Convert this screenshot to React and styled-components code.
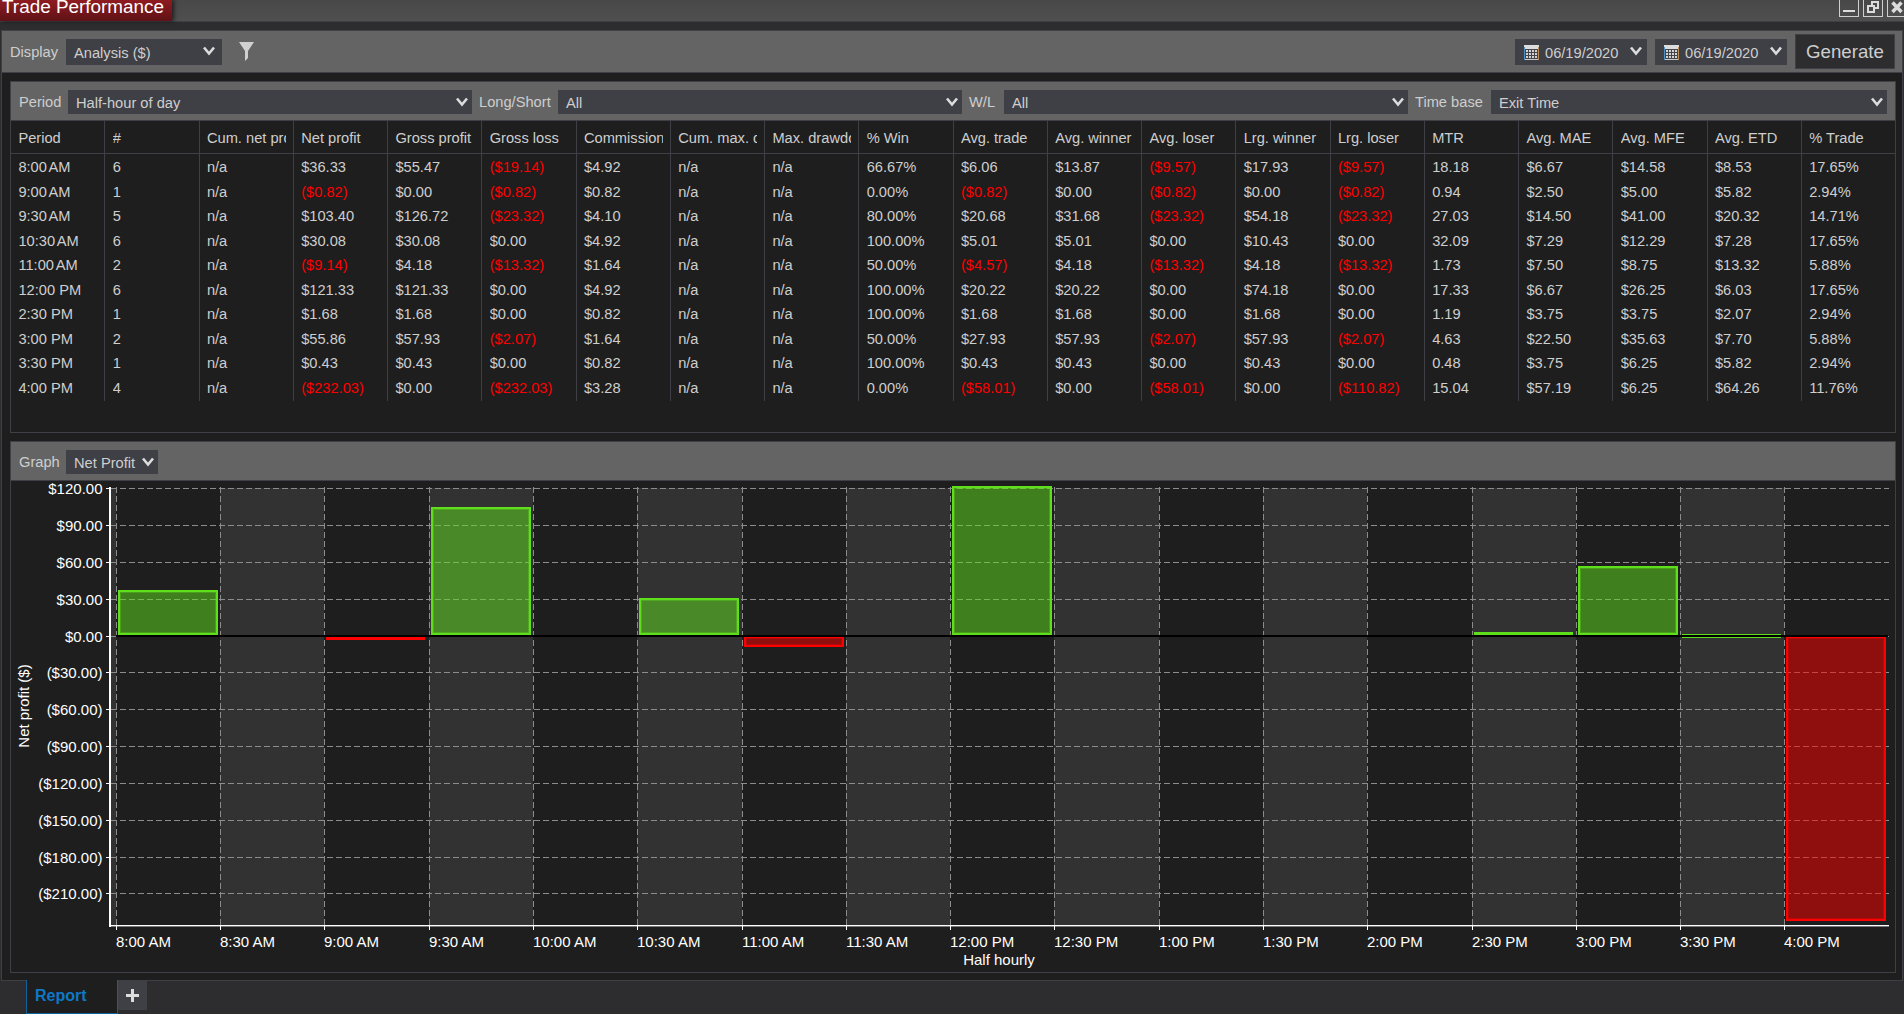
import React from "react";
import styled, { createGlobalStyle, css } from "styled-components";

const GlobalStyle = createGlobalStyle`
  body {
    margin: 0;
    background: #2d2d30;
    overflow: hidden;
  }
`;

const Window = styled.div`
  display: grid;
  grid-template-rows: 22px 959px 33px;
  width: 1904px;
  height: 1014px;
  overflow: hidden;
  background: #2d2d30;
  color: #cecece;
  font: 14.667px "Liberation Sans", Arial, sans-serif;
`;

const TitleBar = styled.div`
  display: flex;
  justify-content: space-between;
  box-sizing: border-box;
  border-bottom: 1px solid #3f3f46;
  background: linear-gradient(#484848, #4f4f4f);
`;

const Title = styled.div`
  width: 172px;
  height: 21px;
  box-sizing: border-box;
  padding-left: 2px;
  background: linear-gradient(#8f1b22, #5f1216);
  box-shadow: 2px 0 4px rgba(0, 0, 0, 0.6);
  color: #fff;
  font-size: 18.9px;
  line-height: 13px;
  white-space: nowrap;
`;

const WindowButtons = styled.div`
  display: flex;
  gap: 4px;
  margin-right: -3px;
`;

const WindowButton = styled.div`
  width: 20px;
  height: 17px;
  box-sizing: border-box;
  border: 1px solid #cfcfcf;
  border-top: none;

  svg {
    display: block;
  }
`;

const Content = styled.div`
  display: flex;
  flex-direction: column;
  box-sizing: border-box;
  margin: 8px 1px 0;
  border: 1px solid #3f3f46;
  background: #1e1e1e;
`;

const Toolbar = styled.div`
  display: flex;
  align-items: center;
  box-sizing: border-box;
  flex: none;
  height: ${props => props.height}px;
  padding: ${props => props.top || 0}px 7px 0 8px;
  border-bottom: 1px solid #3f3f46;
  background: #646464;
`;

const Label = styled.span`
  box-sizing: border-box;
  flex: none;
  width: ${props => props.width}px;
  white-space: nowrap;
`;

const SelectBox = styled.div`
  display: flex;
  align-items: center;
  justify-content: space-between;
  box-sizing: border-box;
  flex: none;
  width: ${props => props.width}px;
  height: ${props => props.height || 24}px;
  margin-right: ${props => props.gap || 0}px;
  padding: 2px ${props => props.inset || 4}px 0 8px;
  background: #3f3f46;
  white-space: nowrap;

  svg {
    margin-top: -3px;
  }
`;

const DateValue = styled.span`
  display: flex;
  align-items: center;
  gap: 6px;

  svg {
    margin: -1px 0 0 1px;
  }
`;

const Spacer = styled.div`
  flex: 1;
`;

const Generate = styled.div`
  box-sizing: border-box;
  width: 100px;
  height: 35px;
  border: 1px solid #3f3f46;
  background: #2d2d30;
  font-size: 18.667px;
  line-height: 33px;
  text-align: center;
`;

const Panel = styled.div`
  display: flex;
  flex-direction: column;
  box-sizing: border-box;
  flex: none;
  width: 1886px;
  height: ${props => props.height}px;
  margin: 8px 0 0 8px;
  border: 1px solid #3f3f46;
`;

const Row = styled.div`
  display: grid;
  grid-template-columns: repeat(19, 94.25px) 1fr;
  height: 24.5px;
  line-height: 26px;

  ${props =>
    props.header &&
    css`
      height: 32px;
      border-bottom: 1px solid #3f3f46;
      line-height: 34px;
    `};
`;

const Cell = styled.div`
  box-sizing: border-box;
  height: 100%;
  border-right: 1px solid #3f3f46;
  padding: 0 7px 0 7.4px;
  color: ${props => (props.negative ? "#ff0000" : "inherit")};

  &:last-child {
    border-right: none;
  }
`;

const Clip = styled.div`
  overflow: hidden;
  white-space: nowrap;
  word-spacing: ${props => props.spacing || 0}px;
`;

const ChartSvg = styled.svg`
  display: block;
  fill: #fff;
  font-size: 15px;
`;

const TabBar = styled.div`
  display: flex;
  padding-left: 26px;
`;

const Tab = styled.div`
  box-sizing: border-box;
  width: 92px;
  height: 34px;
  margin-top: -1px;
  padding-left: 8px;
  border: 1px solid #0e639c;
  border-top: none;
  background: #1e1e1e;
  color: #0e78c8;
  font-size: 16px;
  font-weight: bold;
  line-height: 32px;
`;

const AddTab = styled.div`
  display: grid;
  place-items: center;
  width: 29px;
  height: 29px;
  background: #3f3f46;
`;

const Chevron = () => (
  <svg width="12" height="10" viewBox="0 0 12 10">
    <path d="M1 1.5 L6 7.5 L11 1.5" fill="none" stroke="#dcdcdc" strokeWidth="2.6" />
  </svg>
);

const Calendar = () => (
  <svg width="15" height="15" viewBox="0 0 15 15" shapeRendering="crispEdges">
    <rect width="15" height="15" fill="#46464a" />
    <rect width="15" height="4" fill="#dcdcdc" />
    <path d="M0.5 2V14.5" stroke="#4e8fc4" />
    <path d="M14.5 2V14.5" stroke="#b98a55" />
    <path d="M1 14.5H14" stroke="#c8c8c8" />
    <path
      d="M2 6H13M2 9H13M2 12H13"
      stroke="#d2d2d2"
      strokeWidth="2"
      strokeDasharray="2 1"
    />
  </svg>
);

const Select = ({ children, ...props }) => (
  <SelectBox {...props}>
    {children}
    <Chevron />
  </SelectBox>
);

const DateSelect = ({ gap }) => (
  <Select width={132} height={26} gap={gap} inset={5}>
    <DateValue>
      <Calendar />
      06/19/2020
    </DateValue>
  </Select>
);

const columns = [
  "Period",
  "#",
  "Cum. net profit",
  "Net profit",
  "Gross profit",
  "Gross loss",
  "Commission",
  "Cum. max. drawdown",
  "Max. drawdown",
  "% Win",
  "Avg. trade",
  "Avg. winner",
  "Avg. loser",
  "Lrg. winner",
  "Lrg. loser",
  "MTR",
  "Avg. MAE",
  "Avg. MFE",
  "Avg. ETD",
  "% Trade"
];

const rows = [
  "8:00 AM|6|n/a|$36.33|$55.47|($19.14)|$4.92|n/a|n/a|66.67%|$6.06|$13.87|($9.57)|$17.93|($9.57)|18.18|$6.67|$14.58|$8.53|17.65%",
  "9:00 AM|1|n/a|($0.82)|$0.00|($0.82)|$0.82|n/a|n/a|0.00%|($0.82)|$0.00|($0.82)|$0.00|($0.82)|0.94|$2.50|$5.00|$5.82|2.94%",
  "9:30 AM|5|n/a|$103.40|$126.72|($23.32)|$4.10|n/a|n/a|80.00%|$20.68|$31.68|($23.32)|$54.18|($23.32)|27.03|$14.50|$41.00|$20.32|14.71%",
  "10:30 AM|6|n/a|$30.08|$30.08|$0.00|$4.92|n/a|n/a|100.00%|$5.01|$5.01|$0.00|$10.43|$0.00|32.09|$7.29|$12.29|$7.28|17.65%",
  "11:00 AM|2|n/a|($9.14)|$4.18|($13.32)|$1.64|n/a|n/a|50.00%|($4.57)|$4.18|($13.32)|$4.18|($13.32)|1.73|$7.50|$8.75|$13.32|5.88%",
  "12:00 PM|6|n/a|$121.33|$121.33|$0.00|$4.92|n/a|n/a|100.00%|$20.22|$20.22|$0.00|$74.18|$0.00|17.33|$6.67|$26.25|$6.03|17.65%",
  "2:30 PM|1|n/a|$1.68|$1.68|$0.00|$0.82|n/a|n/a|100.00%|$1.68|$1.68|$0.00|$1.68|$0.00|1.19|$3.75|$3.75|$2.07|2.94%",
  "3:00 PM|2|n/a|$55.86|$57.93|($2.07)|$1.64|n/a|n/a|50.00%|$27.93|$57.93|($2.07)|$57.93|($2.07)|4.63|$22.50|$35.63|$7.70|5.88%",
  "3:30 PM|1|n/a|$0.43|$0.43|$0.00|$0.82|n/a|n/a|100.00%|$0.43|$0.43|$0.00|$0.43|$0.00|0.48|$3.75|$6.25|$5.82|2.94%",
  "4:00 PM|4|n/a|($232.03)|$0.00|($232.03)|$3.28|n/a|n/a|0.00%|($58.01)|$0.00|($58.01)|$0.00|($110.82)|15.04|$57.19|$6.25|$64.26|11.76%"
].map(row => row.split("|"));

const times = [
  "8:00 AM",
  "8:30 AM",
  "9:00 AM",
  "9:30 AM",
  "10:00 AM",
  "10:30 AM",
  "11:00 AM",
  "11:30 AM",
  "12:00 PM",
  "12:30 PM",
  "1:00 PM",
  "1:30 PM",
  "2:00 PM",
  "2:30 PM",
  "3:00 PM",
  "3:30 PM",
  "4:00 PM"
];

// slot index, top, height
const bars = [
  { slot: 0, top: 590, height: 45 },
  { slot: 2, top: 636, height: 4, loss: true },
  { slot: 3, top: 507, height: 128 },
  { slot: 5, top: 598, height: 37 },
  { slot: 6, top: 636, height: 11, loss: true },
  { slot: 8, top: 486, height: 149 },
  { slot: 13, top: 632, height: 3 },
  { slot: 14, top: 566, height: 69 },
  { slot: 15, top: 634, height: 4 },
  { slot: 16, top: 636, height: 285, loss: true }
];

const slotX = i => Math.floor(116.4 + i * 104.28);
const levelY = i => Math.floor(488.85 + i * 36.82);

const levelText = i => {
  const value = 120 - i * 30;
  return value < 0 ? `($${-value}.00)` : `$${value}.00`;
};

const Bar = ({ slot, top, height, loss }) => {
  const x = slotX(slot) + 2;
  const color = loss ? "#ff0000" : "#5fdf1b";
  if (height < 5) {
    return <rect x={x} y={top} width="99" height={height} fill={color} />;
  }
  return (
    <g fill={color}>
      <rect x={x} y={top} width="100" height={height} fillOpacity="0.5" />
      <rect
        x={x + 1.5}
        y={top + 1.5}
        width="97"
        height={height - 3}
        fill="none"
        stroke={color}
        strokeOpacity="0.35"
        strokeWidth="3"
      />
      <rect
        x={x + 1}
        y={top + 1}
        width="98"
        height={height - 2}
        fill="none"
        stroke={color}
        strokeWidth="2"
      />
    </g>
  );
};

const Chart = () => (
  <ChartSvg width="1884" height="491" viewBox="11 481 1884 491">
    <g shapeRendering="crispEdges">
      <rect x="111" y="488" width="5" height="437" fill="#323232" />
      {times.map(
        (time, i) =>
          i % 2 === 1 && (
            <rect
              key={time}
              x={slotX(i)}
              y="488"
              width={slotX(i + 1) - slotX(i)}
              height="437"
              fill="#323232"
            />
          )
      )}
      <g stroke="#8c8c8c" strokeDasharray="6 3">
        {times.map((time, i) => (
          <path key={time} d={`M${slotX(i) + 0.5} 487V925`} />
        ))}
        {Array.from({ length: 12 }, (_, i) => (
          <path key={i} d={`M111 ${levelY(i) + 0.5}H1889`} />
        ))}
      </g>
      <g stroke="#fff">
        <path d="M110 487V927" strokeWidth="2" />
        <path d="M109 925.5H1889" />
        <path d="M111 926.5H1889" stroke="#77777b" />
        {times.map((time, i) => (
          <path key={time} d={`M${slotX(i) + 0.5} 925V930`} />
        ))}
        {Array.from({ length: 12 }, (_, i) => (
          <path key={i} d={`M106 ${levelY(i) + 0.5}H110`} />
        ))}
      </g>
      {bars.map(bar => (
        <Bar key={bar.slot} {...bar} />
      ))}
      <path d="M116 636H1888" stroke="#000" strokeWidth="2" />
    </g>
    {Array.from({ length: 12 }, (_, i) => (
      <text key={i} x="102.5" y={levelY(i) + 6} textAnchor="end">
        {levelText(i)}
      </text>
    ))}
    {times.map((time, i) => (
      <text key={time} x={slotX(i)} y="947">
        {time}
      </text>
    ))}
    <text x="999" y="965" textAnchor="middle">
      Half hourly
    </text>
    <text transform="translate(29 706) rotate(-90)" textAnchor="middle">
      Net profit ($)
    </text>
  </ChartSvg>
);

const App = () => (
  <>
    <GlobalStyle />
    <Window>
      <TitleBar>
        <Title>Trade Performance</Title>
        <WindowButtons>
          <WindowButton>
            <svg width="18" height="16" shapeRendering="crispEdges">
              <path d="M3 11H15" stroke="#dcdcdc" strokeWidth="2" />
            </svg>
          </WindowButton>
          <WindowButton>
            <svg width="18" height="16" shapeRendering="crispEdges">
              <path
                d="M8 6V2H14V8H10M4 6H10V12H4Z"
                fill="none"
                stroke="#dcdcdc"
                strokeWidth="2"
              />
            </svg>
          </WindowButton>
          <WindowButton>
            <svg width="18" height="16">
              <path d="M4.5 2.5L13.5 12M13.5 2.5L4.5 12" stroke="#dcdcdc" strokeWidth="3.5" />
            </svg>
          </WindowButton>
        </WindowButtons>
      </TitleBar>
      <Content>
        <Toolbar height={42}>
          <Label width={56}>Display</Label>
          <Select width={156} height={26} gap={17} inset={7}>
            Analysis ($)
          </Select>
          <svg width="15" height="19" viewBox="0 0 15 19">
            <path d="M0 0H15L9 9V16L6 19V9Z" fill="#d0d0d0" />
          </svg>
          <Spacer />
          <DateSelect gap={8} />
          <DateSelect gap={8} />
          <Generate>Generate</Generate>
        </Toolbar>
        <Panel height={352}>
          <Toolbar height={39} top={2}>
            <Label width={49}>Period</Label>
            <Select width={404} gap={7}>
              Half-hour of day
            </Select>
            <Label width={79}>Long/Short</Label>
            <Select width={404} gap={7}>
              All
            </Select>
            <Label width={35}>W/L</Label>
            <Select width={404} gap={7}>
              All
            </Select>
            <Label width={76}>Time base</Label>
            <Select width={396}>Exit Time</Select>
          </Toolbar>
          <Row header>
            {columns.map(name => (
              <Cell key={name}>
                <Clip>{name}</Clip>
              </Cell>
            ))}
          </Row>
          {rows.map(row => (
            <Row key={row[0]}>
              {row.map((value, i) => (
                <Cell key={columns[i]} negative={value[0] === "("}>
                  <Clip spacing={value.endsWith("AM") ? -1.6 : 0}>{value}</Clip>
                </Cell>
              ))}
            </Row>
          ))}
        </Panel>
        <Panel height={532}>
          <Toolbar height={39} top={2}>
            <Label width={47}>Graph</Label>
            <Select width={92}>Net Profit</Select>
          </Toolbar>
          <Chart />
        </Panel>
      </Content>
      <TabBar>
        <Tab>Report</Tab>
        <AddTab>
          <svg width="13" height="13" shapeRendering="crispEdges">
            <path d="M0 6.5H13M6.5 0V13" stroke="#dcdcdc" strokeWidth="3" />
          </svg>
        </AddTab>
      </TabBar>
    </Window>
  </>
);

export default App;
